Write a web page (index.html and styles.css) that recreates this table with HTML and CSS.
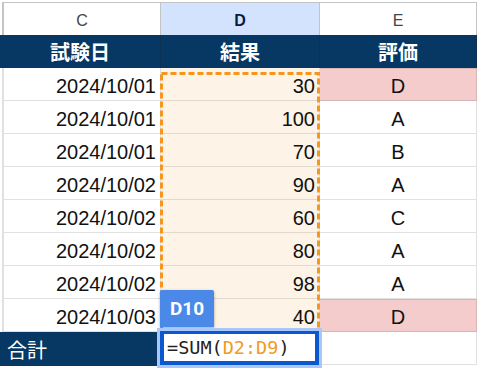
FILE: index.html
```html
<!DOCTYPE html>
<html lang="ja">
<head>
<meta charset="utf-8">
<link rel="stylesheet" href="styles.css">
</head>
<body>
<div class="canvas">
  <div class="sheet">
    <div class="colhead first">C</div>
    <div class="colhead sel">D</div>
    <div class="colhead">E</div>

    <div class="th">試験日</div>
    <div class="th">結果</div>
    <div class="th">評価</div>

    <div class="cell first date">2024/10/01</div><div class="cell num">30</div><div class="cell grade bad">D</div>
    <div class="cell first date">2024/10/01</div><div class="cell num">100</div><div class="cell grade">A</div>
    <div class="cell first date">2024/10/01</div><div class="cell num">70</div><div class="cell grade">B</div>
    <div class="cell first date">2024/10/02</div><div class="cell num">90</div><div class="cell grade">A</div>
    <div class="cell first date">2024/10/02</div><div class="cell num">60</div><div class="cell grade">C</div>
    <div class="cell first date">2024/10/02</div><div class="cell num">80</div><div class="cell grade">A</div>
    <div class="cell first date">2024/10/02</div><div class="cell num">98</div><div class="cell grade">A</div>
    <div class="cell first date">2024/10/03</div><div class="cell num">40</div><div class="cell grade bad">D</div>

    <div class="total">合計</div>
    <div class="cell empty"></div>
    <div class="cell grade"></div>
  </div>

  <svg class="marquee" width="160" height="268" viewBox="0 0 160 268">
    <rect x="1.5" y="1.5" width="157" height="265" fill="none" stroke="#f5961e" stroke-width="3" stroke-dasharray="6 3"/>
  </svg>

  <div class="chip">D10</div>
  <div class="editor">=SUM(<span class="ref">D2:D9</span>)</div>
</div>
</body>
</html>
```

FILE: styles.css
```css
html, body {
  margin: 0;
  padding: 0;
  background: #ffffff;
}

.canvas {
  position: relative;
  width: 481px;
  height: 370px;
  overflow: hidden;
  font-family: "Liberation Sans", Arial, "Noto Sans CJK JP", sans-serif;
}

.sheet {
  display: grid;
  grid-template-columns: 161px 159px 157px;
  grid-auto-rows: 33px;
  padding-top: 2px;
}

.colhead {
  height: 38px;
  box-sizing: border-box;
  border-top: 1px solid #c4c4c4;
  border-right: 1px solid #c4c4c4;
  border-bottom: 1px solid #c4c4c4;
  display: flex;
  align-items: center;
  justify-content: center;
  font-family: "Liberation Sans", Arial, sans-serif;
  font-size: 16px;
  color: #444444;
  background: #ffffff;
}

.colhead.first {
  margin-left: 2px;
  border-left: 2px solid #c4c4c4;
}

.colhead.sel {
  background: #d3e3fd;
  color: #0b1b3f;
  font-weight: 700;
}

.th {
  background: #073763;
  color: #ffffff;
  font-family: "Noto Sans CJK JP", sans-serif;
  font-weight: 700;
  font-size: 20px;
  display: flex;
  align-items: center;
  justify-content: center;
  border-right: 1px solid #0f3152;
  box-sizing: border-box;
}

.cell {
  box-sizing: border-box;
  border-right: 1px solid #e1e1e1;
  border-bottom: 1px solid #e1e1e1;
  display: flex;
  align-items: center;
  padding-top: 5px;
  font-size: 20px;
  color: #111111;
}

.cell.first {
  margin-left: 2px;
  border-left: 2px solid #e1e1e1;
}

.date {
  justify-content: flex-end;
  padding-right: 4px;
}

.num {
  justify-content: flex-end;
  padding-right: 4px;
  background: #fdf3e7;
  border-bottom-color: #e2d8cc;
}

.grade {
  justify-content: center;
}

.grade.bad {
  background: #f4cccc;
  border-bottom-color: #d8b4b4;
  border-right-color: #d8b4b4;
  box-shadow: inset 0 1px 0 #d8b4b4;
}

.total {
  background: #073763;
  color: #ffffff;
  font-family: "Noto Sans CJK JP", sans-serif;
  font-size: 20px;
  display: flex;
  align-items: center;
  padding-left: 7px;
  height: 34px;
}

.empty {
  background: #ffffff;
}

.marquee {
  position: absolute;
  left: 160px;
  top: 72px;
}

.chip {
  position: absolute;
  left: 160px;
  top: 290px;
  width: 54px;
  height: 37px;
  background: #4a89e8;
  color: #ffffff;
  font-family: Roboto, "Liberation Sans", sans-serif;
  font-weight: 700;
  font-size: 19px;
  display: flex;
  align-items: center;
  justify-content: center;
  border-radius: 2px 2px 0 0;
  box-shadow: 0 1px 3px rgba(0, 0, 0, 0.35);
}

.editor {
  position: absolute;
  left: 160px;
  top: 331px;
  width: 159px;
  height: 34px;
  box-sizing: border-box;
  border: 4px solid #0b57d0;
  border-top-width: 3px;
  box-shadow: 0 0 0 3px #a8c7fa;
  background: #ffffff;
  display: flex;
  align-items: center;
  padding-left: 3px;
  font-family: "DejaVu Sans Mono", "Liberation Mono", monospace;
  font-size: 18.5px;
  color: #222222;
  white-space: nowrap;
}

.ref {
  color: #f29b1d;
}
```
